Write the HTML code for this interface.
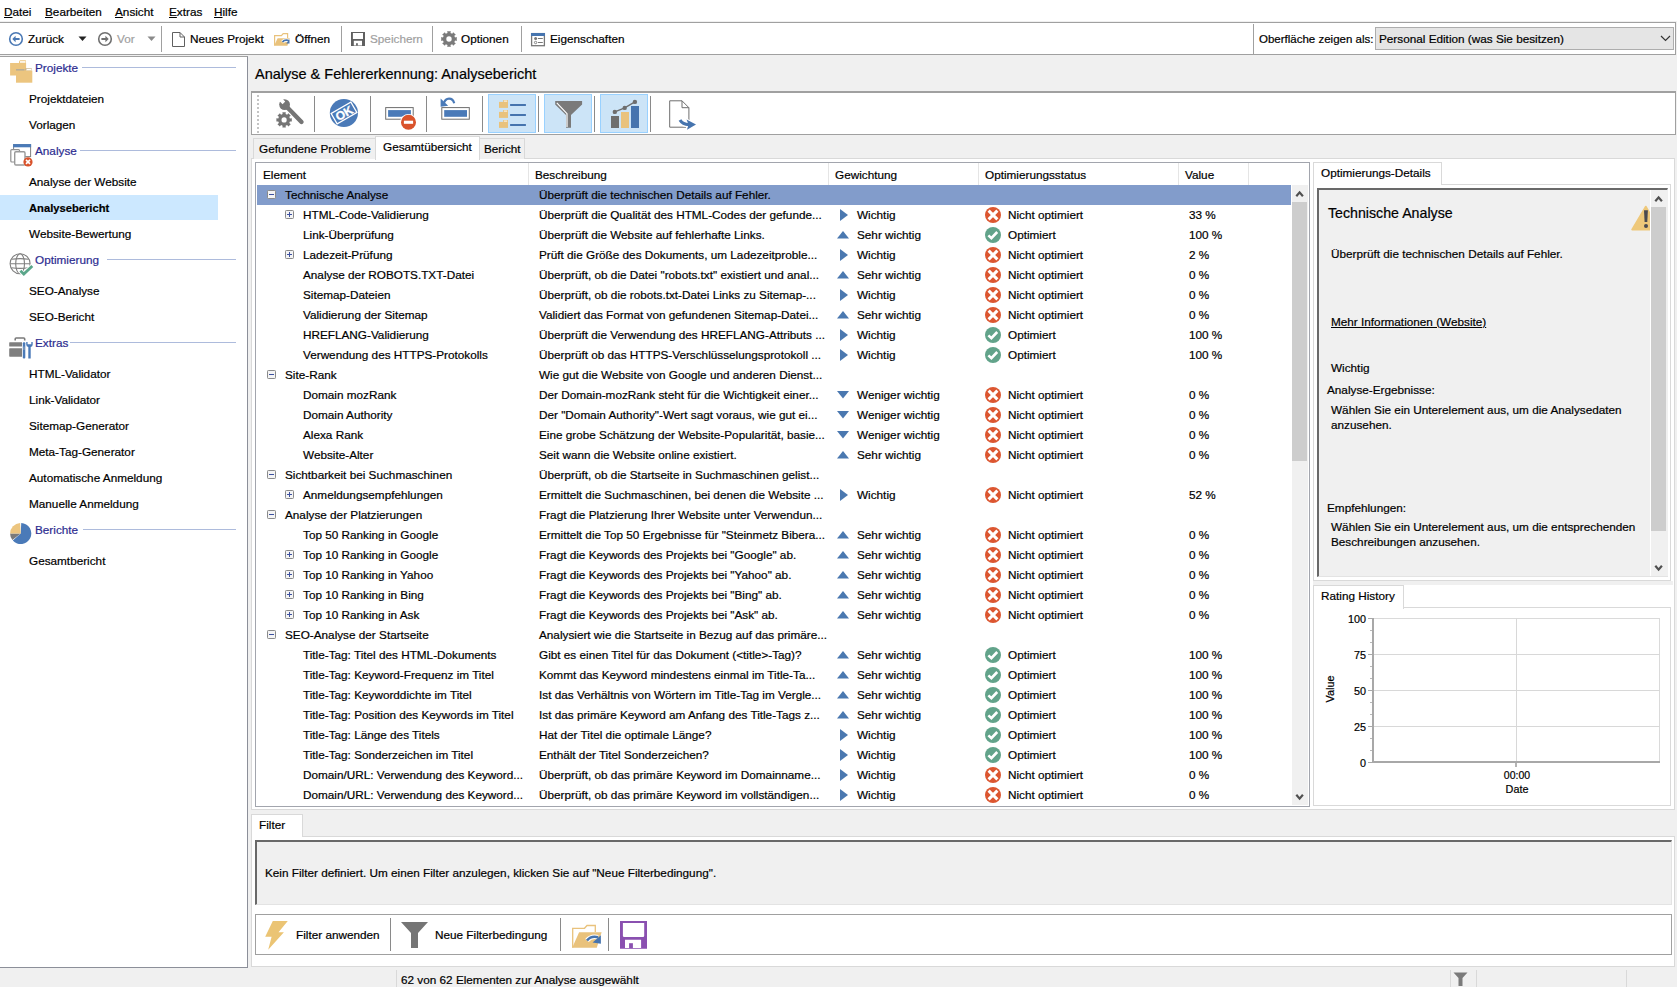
<!DOCTYPE html>
<html><head><meta charset="utf-8"><title>Analysebericht</title>
<style>
*{box-sizing:border-box;margin:0;padding:0}
html,body{width:1677px;height:987px;overflow:hidden}
body{position:relative;background:#f0f0f0;font-family:"Liberation Sans",sans-serif;font-size:11.75px;color:#000}
.a{position:absolute}
.t{position:absolute;white-space:nowrap;-webkit-text-stroke:0.2px currentColor}
u{text-decoration:underline;text-underline-offset:1px}
</style></head><body>
<div class="a" style="left:0px;top:0px;width:1677px;height:22px;background:#fff"></div>
<div class="t" style="left:4px;top:1.63px;line-height:20px;font-size:11.75px;"><u>D</u>atei</div>
<div class="t" style="left:45px;top:1.63px;line-height:20px;font-size:11.75px;"><u>B</u>earbeiten</div>
<div class="t" style="left:115px;top:1.63px;line-height:20px;font-size:11.75px;"><u>A</u>nsicht</div>
<div class="t" style="left:169px;top:1.63px;line-height:20px;font-size:11.75px;"><u>E</u>xtras</div>
<div class="t" style="left:214px;top:1.63px;line-height:20px;font-size:11.75px;"><u>H</u>ilfe</div>
<div class="a" style="left:0px;top:21px;width:1677px;height:1px;background:#f0f0f0"></div>
<div class="a" style="left:0px;top:22px;width:1676px;height:33px;background:#fff;border-top:1px solid #a0a0a0;border-bottom:1px solid #a0a0a0;border-right:1px solid #a0a0a0"></div>
<svg class="a" style="left:8px;top:31px;" width="16" height="16" viewBox="0 0 16 16"><circle cx="8" cy="8" r="6.3" fill="none" stroke="#4a78b4" stroke-width="1.6"/><path d="M4.3 8 L7.6 4.8 L7.6 6.9 L11.6 6.9 L11.6 9.1 L7.6 9.1 L7.6 11.2 Z" fill="#4a78b4"/></svg>
<div class="t" style="left:28px;top:28.83px;line-height:20px;font-size:11.75px;">Zurück</div>
<svg class="a" style="left:78px;top:36px;" width="9" height="6" viewBox="0 0 9 6"><path d="M0.5 0.5 L8.5 0.5 L4.5 5 Z" fill="#222"/></svg>
<svg class="a" style="left:97px;top:31px;" width="16" height="16" viewBox="0 0 16 16"><circle cx="8" cy="8" r="6.3" fill="none" stroke="#707070" stroke-width="1.6"/><path d="M11.7 8 L8.4 4.8 L8.4 6.9 L4.4 6.9 L4.4 9.1 L8.4 9.1 L8.4 11.2 Z" fill="#707070"/></svg>
<div class="t" style="left:117px;top:28.83px;line-height:20px;font-size:11.75px;color:#a0a0a0">Vor</div>
<svg class="a" style="left:147px;top:36px;" width="9" height="6" viewBox="0 0 9 6"><path d="M0.5 0.5 L8.5 0.5 L4.5 5 Z" fill="#8a8a8a"/></svg>
<div class="a" style="left:161px;top:26px;width:1px;height:26px;background:#a0a0a0"></div>
<svg class="a" style="left:172px;top:32px;" width="13" height="15" viewBox="0 0 13 15"><path d="M0.5 0.5 H8 L12.5 5 V14.5 H0.5 Z" fill="#fff" stroke="#606060"/><path d="M8 0.5 V5 H12.5" fill="none" stroke="#606060"/></svg>
<div class="t" style="left:190px;top:28.83px;line-height:20px;font-size:11.75px;">Neues Projekt</div>
<svg class="a" style="left:272px;top:31px;" width="20" height="17" viewBox="0 0 20 17"><path d="M2.6 14.4 V4.6 H9.4 L11.2 2.6 H15.6 V7.3" fill="none" stroke="#e9c27c" stroke-width="1.2"/><path d="M5.6 7.3 H17.8 L15.4 14.8 H2.1 Z" fill="#e9c27c"/><path d="M10.5 11 Q12.5 8.4 17 9.6" fill="none" stroke="#fff" stroke-width="3.4"/><path d="M10.5 11 Q12.5 8.4 17 9.6" fill="none" stroke="#4674ae" stroke-width="1.8"/><path d="M17.5 8.6 V12.6 H14.2 Z" fill="#4674ae"/></svg>
<div class="t" style="left:295px;top:28.83px;line-height:20px;font-size:11.75px;">Öffnen</div>
<div class="a" style="left:341px;top:26px;width:1px;height:26px;background:#a0a0a0"></div>
<svg class="a" style="left:351px;top:32px;" width="14" height="14" viewBox="0 0 14 14"><path d="M0 0 H14 V14 H0 Z M1.9 0.9 V7 H12 V0.9 Z M2.8 8.8 V13.4 H11 V8.8 Z" fill="#606060" fill-rule="evenodd"/><rect x="5.1" y="11.2" width="1.7" height="2.4" fill="#606060"/></svg>
<div class="t" style="left:370px;top:28.83px;line-height:20px;font-size:11.75px;color:#a0a0a0">Speichern</div>
<div class="a" style="left:432px;top:26px;width:1px;height:26px;background:#a0a0a0"></div>
<svg class="a" style="left:441px;top:31px;" width="16" height="16" viewBox="0 0 16 16"><path d="M15.77 6.10 L15.77 9.90 L14.03 9.43 L13.28 11.25 L14.84 12.15 L12.15 14.84 L11.25 13.28 L9.43 14.03 L9.90 15.77 L6.10 15.77 L6.57 14.03 L4.75 13.28 L3.85 14.84 L1.16 12.15 L2.72 11.25 L1.97 9.43 L0.23 9.90 L0.23 6.10 L1.97 6.57 L2.72 4.75 L1.16 3.85 L3.85 1.16 L4.75 2.72 L6.57 1.97 L6.10 0.23 L9.90 0.23 L9.43 1.97 L11.25 2.72 L12.15 1.16 L14.84 3.85 L13.28 4.75 L14.03 6.57Z M10.70 8.00 A2.7 2.7 0 1 0 5.30 8.00 A2.7 2.7 0 1 0 10.70 8.00Z" fill="#7a7a7a" fill-rule="evenodd"/></svg>
<div class="t" style="left:461px;top:28.83px;line-height:20px;font-size:11.75px;">Optionen</div>
<div class="a" style="left:521px;top:26px;width:1px;height:26px;background:#a0a0a0"></div>
<svg class="a" style="left:530px;top:32px;" width="16" height="15" viewBox="0 0 16 15"><rect x="1.6" y="1.6" width="12.8" height="12.1" fill="#fff" stroke="#777" stroke-width="1.3"/><rect x="1" y="1" width="14" height="3" fill="#4674ae"/><circle cx="5.6" cy="6.5" r="1.5" fill="#777"/><circle cx="5.6" cy="10.5" r="1.2" fill="none" stroke="#777" stroke-width="0.9"/><rect x="8" y="6" width="4.8" height="1" fill="#777"/><rect x="8" y="10" width="4.8" height="1" fill="#777"/></svg>
<div class="t" style="left:550px;top:28.83px;line-height:20px;font-size:11.75px;">Eigenschaften</div>
<div class="a" style="left:1253px;top:24px;width:1px;height:30px;background:#a0a0a0"></div>
<div class="t" style="left:1259px;top:28.92px;line-height:20px;font-size:11.5px;">Oberfläche zeigen als:</div>
<div class="a" style="left:1375px;top:27px;width:299px;height:23px;background:#e5e5e5;border:1px solid #adadad"></div>
<div class="t" style="left:1379px;top:28.83px;line-height:20px;font-size:11.75px;">Personal Edition (was Sie besitzen)</div>
<svg class="a" style="left:1660px;top:35px;" width="11" height="7" viewBox="0 0 11 7"><path d="M1 1 L5.5 5.5 L10 1" fill="none" stroke="#333" stroke-width="1.2"/></svg>
<div class="a" style="left:0px;top:56px;width:248px;height:912px;background:#fff;border-top:1px solid #a0a0a0;border-right:1px solid #8c8f99;border-bottom:1px solid #8c8f99"></div>
<svg class="a" style="left:8px;top:60px;" width="28" height="28" viewBox="0 0 28 28"><path d="M11 1.5 Q11.5 0.3 12.5 0.3 H17.5 Q18 0.3 18 1 V3 H11 Z" fill="#ecc57f"/><rect x="12" y="1.2" width="5.5" height="1.5" fill="#fff"/><rect x="2.1" y="3" width="16" height="12.5" fill="#ecc57f"/><rect x="8" y="9" width="8.5" height="2" fill="#b7ad97"/><path d="M17.5 8.2 H23.8 V10.5 H16.5 Z" fill="#c9b38a"/><rect x="18.5" y="8.9" width="5" height="1.3" fill="#fff"/><rect x="8" y="10.6" width="16.3" height="12.1" fill="#ecc57f"/></svg>
<div class="t" style="left:35px;top:57.93px;line-height:20px;font-size:11.75px;color:#2c2c90">Projekte</div>
<div class="a" style="left:82px;top:67px;width:154px;height:1px;background:#adbbdc"></div>
<div class="t" style="left:29px;top:88.63px;line-height:20px;font-size:11.75px;">Projektdateien</div>
<div class="t" style="left:29px;top:114.73px;line-height:20px;font-size:11.75px;">Vorlagen</div>
<svg class="a" style="left:8px;top:142px;" width="28" height="28" viewBox="0 0 28 28"><rect x="5.6" y="2.6" width="17" height="12" fill="#fff" stroke="#808080"/><rect x="5.1" y="2.1" width="18" height="3.2" fill="#4a7ab8"/><rect x="2.8" y="7.6" width="8.7" height="12.4" rx="1" fill="#fff" stroke="#909090" stroke-width="1.2"/><rect x="6.7" y="9.7" width="10.3" height="13.3" rx="1.2" fill="#fff" stroke="#999" stroke-width="1.4"/><circle cx="20" cy="19.9" r="4.6" fill="#d9532c"/><path d="M18 17.9 L22 21.9 M22 17.9 L18 21.9" stroke="#fff" stroke-width="1.6"/></svg>
<div class="t" style="left:35px;top:140.53px;line-height:20px;font-size:11.75px;color:#2c2c90">Analyse</div>
<div class="a" style="left:80px;top:150px;width:156px;height:1px;background:#adbbdc"></div>
<div class="t" style="left:29px;top:171.53px;line-height:20px;font-size:11.75px;">Analyse der Website</div>
<div class="a" style="left:0px;top:195px;width:218px;height:25px;background:#cce8ff"></div>
<div class="t" style="left:29px;top:197.82px;line-height:20px;font-size:11.2px;font-weight:bold;font-size:11.2px">Analysebericht</div>
<div class="t" style="left:29px;top:223.73px;line-height:20px;font-size:11.75px;">Website-Bewertung</div>
<svg class="a" style="left:8px;top:251px;" width="28" height="28" viewBox="0 0 28 28"><circle cx="12.1" cy="12.8" r="10" fill="none" stroke="#808080" stroke-width="1.1"/><ellipse cx="12.1" cy="12.8" rx="4.4" ry="10" fill="none" stroke="#808080" stroke-width="1.1"/><path d="M3.5 8.2 Q12 7 20.7 8.2 M2.2 12.8 H22 M3.5 16.8 Q12 18 20.7 16.8" fill="none" stroke="#808080" stroke-width="1.1"/><path d="M12.4 19.8 L15.8 23.1 L24.3 14.9" fill="none" stroke="#fff" stroke-width="4.5"/><path d="M12.4 19.8 L15.8 23.1 L24.3 14.9" fill="none" stroke="#5ba68a" stroke-width="2.8"/></svg>
<div class="t" style="left:35px;top:249.53px;line-height:20px;font-size:11.75px;color:#2c2c90">Optimierung</div>
<div class="a" style="left:107px;top:259px;width:129px;height:1px;background:#adbbdc"></div>
<div class="t" style="left:29px;top:280.53px;line-height:20px;font-size:11.75px;">SEO-Analyse</div>
<div class="t" style="left:29px;top:306.53px;line-height:20px;font-size:11.75px;">SEO-Bericht</div>
<svg class="a" style="left:8px;top:334px;" width="28" height="28" viewBox="0 0 28 28"><path d="M7.2 6.6 V5 Q7.2 4 8.2 4 H15.7 Q16.7 4 16.7 5 V6.6" fill="none" stroke="#7a7a7a" stroke-width="1.6"/><rect x="1.2" y="8.2" width="17.3" height="4.4" rx="0.6" fill="#7f7f7f"/><rect x="1.2" y="14.2" width="17.3" height="8.5" rx="0.6" fill="#7f7f7f"/><rect x="14" y="8" width="5" height="17" fill="#fff"/><rect x="14.8" y="8.2" width="2.5" height="16.4" rx="1" fill="#4a7ab8"/><rect x="15.5" y="12.5" width="1" height="3.5" fill="#9ab"/><path d="M18.2 8 V10.5 Q18.2 12.5 20.3 13 V24.6 H22.7 V13 Q24.7 12.5 24.7 10.5 V8 L23.3 8 V10.3 H19.6 V8 Z" fill="#4a7ab8"/></svg>
<div class="t" style="left:35px;top:332.53px;line-height:20px;font-size:11.75px;color:#2c2c90">Extras</div>
<div class="a" style="left:70px;top:342px;width:166px;height:1px;background:#adbbdc"></div>
<div class="t" style="left:29px;top:363.53px;line-height:20px;font-size:11.75px;">HTML-Validator</div>
<div class="t" style="left:29px;top:389.53px;line-height:20px;font-size:11.75px;">Link-Validator</div>
<div class="t" style="left:29px;top:415.53px;line-height:20px;font-size:11.75px;">Sitemap-Generator</div>
<div class="t" style="left:29px;top:441.53px;line-height:20px;font-size:11.75px;">Meta-Tag-Generator</div>
<div class="t" style="left:29px;top:467.53px;line-height:20px;font-size:11.75px;">Automatische Anmeldung</div>
<div class="t" style="left:29px;top:493.53px;line-height:20px;font-size:11.75px;">Manuelle Anmeldung</div>
<svg class="a" style="left:8px;top:521px;" width="28" height="28" viewBox="0 0 28 28"><path d="M12.7 12.5 L13.25 1.91 A10.6 10.6 0 1 1 4.82 19.59 Z" fill="#4a7ab8"/><path d="M12.7 12.5 L4.35 19.03 A10.6 10.6 0 0 1 2.10 12.50 Z" fill="#7a7a7a"/><path d="M12.7 12.5 L2.10 12.50 A10.6 10.6 0 0 1 12.15 1.91 Z" fill="#ecc57f"/></svg>
<div class="t" style="left:35px;top:519.53px;line-height:20px;font-size:11.75px;color:#2c2c90">Berichte</div>
<div class="a" style="left:83px;top:529px;width:153px;height:1px;background:#adbbdc"></div>
<div class="t" style="left:29px;top:550.53px;line-height:20px;font-size:11.75px;">Gesamtbericht</div>
<div class="t" style="left:255px;top:63.68px;line-height:20px;font-size:14.5px;">Analyse &amp; Fehlererkennung: Analysebericht</div>
<div class="a" style="left:251px;top:91px;width:1425px;height:44px;background:#fff;border:1px solid #a0a0a0;border-top:2px solid #a0a0a0"></div>
<div class="a" style="left:257px;top:95px;width:2px;height:2px;background:#c4c4c4"></div>
<div class="a" style="left:257px;top:99px;width:2px;height:2px;background:#c4c4c4"></div>
<div class="a" style="left:257px;top:103px;width:2px;height:2px;background:#c4c4c4"></div>
<div class="a" style="left:257px;top:107px;width:2px;height:2px;background:#c4c4c4"></div>
<div class="a" style="left:257px;top:111px;width:2px;height:2px;background:#c4c4c4"></div>
<div class="a" style="left:257px;top:115px;width:2px;height:2px;background:#c4c4c4"></div>
<div class="a" style="left:257px;top:119px;width:2px;height:2px;background:#c4c4c4"></div>
<div class="a" style="left:257px;top:123px;width:2px;height:2px;background:#c4c4c4"></div>
<div class="a" style="left:257px;top:127px;width:2px;height:2px;background:#c4c4c4"></div>
<div class="a" style="left:257px;top:131px;width:2px;height:2px;background:#c4c4c4"></div>
<div class="a" style="left:314px;top:96px;width:1px;height:36px;background:#8a8a8a"></div>
<div class="a" style="left:370px;top:96px;width:1px;height:36px;background:#8a8a8a"></div>
<div class="a" style="left:426px;top:96px;width:1px;height:36px;background:#8a8a8a"></div>
<div class="a" style="left:482px;top:96px;width:1px;height:36px;background:#8a8a8a"></div>
<div class="a" style="left:538px;top:96px;width:1px;height:36px;background:#8a8a8a"></div>
<div class="a" style="left:594px;top:96px;width:1px;height:36px;background:#8a8a8a"></div>
<div class="a" style="left:650px;top:96px;width:1px;height:36px;background:#8a8a8a"></div>
<div class="a" style="left:488px;top:94px;width:48px;height:39px;background:#cce4f7;border:1px solid #99d1ff"></div>
<div class="a" style="left:544px;top:94px;width:48px;height:39px;background:#cce4f7;border:1px solid #99d1ff"></div>
<div class="a" style="left:600px;top:94px;width:48px;height:39px;background:#cce4f7;border:1px solid #99d1ff"></div>
<svg class="a" style="left:274px;top:97px;" width="34" height="34" viewBox="0 0 34 34"><path d="M10.5 7.5 L27.5 25" stroke="#757575" stroke-width="4.4" stroke-linecap="round"/><circle cx="10.6" cy="7.6" r="5.4" fill="#757575"/><path d="M4.5 3.2 L8.6 7.2 L11.2 4.6 L7.2 0.4 Z" fill="#fff"/><circle cx="10.1" cy="22.9" r="8.6" fill="#fff"/><path d="M17.81 21.18 L17.81 24.62 L15.91 24.40 L15.27 25.95 L16.77 27.13 L14.33 29.57 L13.15 28.07 L11.60 28.71 L11.82 30.61 L8.38 30.61 L8.60 28.71 L7.05 28.07 L5.87 29.57 L3.43 27.13 L4.93 25.95 L4.29 24.40 L2.39 24.62 L2.39 21.18 L4.29 21.40 L4.93 19.85 L3.43 18.67 L5.87 16.23 L7.05 17.73 L8.60 17.09 L8.38 15.19 L11.82 15.19 L11.60 17.09 L13.15 17.73 L14.33 16.23 L16.77 18.67 L15.27 19.85 L15.91 21.40Z M12.70 22.90 A2.6 2.6 0 1 0 7.50 22.90 A2.6 2.6 0 1 0 12.70 22.90Z" fill="#757575" fill-rule="evenodd"/></svg>
<svg class="a" style="left:329px;top:98px;" width="30" height="30" viewBox="0 0 30 30"><circle cx="14.9" cy="15" r="14.1" fill="#4a7ab8"/><g transform="rotate(-30 15 15)"><rect x="3.6" y="9" width="22.8" height="12" fill="none" stroke="#fff" stroke-width="1.3"/><text x="15" y="19.4" text-anchor="middle" font-family="Liberation Sans" font-weight="bold" font-size="12" fill="#fff" stroke="#fff" stroke-width="0.3">OK</text></g></svg>
<svg class="a" style="left:384px;top:104px;" width="34" height="28" viewBox="0 0 34 28"><rect x="1.7" y="3.6" width="27.5" height="11.6" fill="#fff" stroke="#6e6e6e"/><rect x="4.1" y="6.1" width="22.8" height="6.7" fill="#4a7ab8"/><circle cx="24.5" cy="18.2" r="8.3" fill="#fff"/><circle cx="24.5" cy="18.2" r="7.5" fill="#d9532c"/><rect x="19.9" y="16.7" width="9.2" height="3.1" fill="#fff"/></svg>
<svg class="a" style="left:439px;top:96px;" width="34" height="28" viewBox="0 0 34 28"><rect x="2.8" y="11.6" width="27.5" height="11.6" fill="#fff" stroke="#6e6e6e"/><rect x="5.2" y="14.1" width="22.8" height="6.7" fill="#4a7ab8"/><path d="M4.6 8 Q6 2.6 10 2.6 Q14 2.6 15.2 7.2" fill="none" stroke="#fff" stroke-width="4"/><path d="M4.6 8 Q6 2.6 10 2.6 Q14 2.6 15.2 7.2" fill="none" stroke="#4a7ab8" stroke-width="2.2"/><path d="M1.6 2.6 L1.6 10.8 L9.2 9.8 Z" fill="#4a7ab8"/></svg>
<svg class="a" style="left:488px;top:94px;" width="48" height="38" viewBox="0 0 48 38"><rect x="15.2" y="6" width="4.8" height="2.2" fill="#e9c27c"/><rect x="16" y="6.6" width="3.2" height="1" fill="#fff"/><rect x="11" y="7.9" width="9" height="6" fill="#e9c27c"/><rect x="22.1" y="10" width="15.8" height="2" fill="#4674ae"/><rect x="15.2" y="16" width="4.8" height="2.2" fill="#e9c27c"/><rect x="16" y="16.6" width="3.2" height="1" fill="#fff"/><rect x="11" y="17.9" width="9" height="6" fill="#e9c27c"/><rect x="22.1" y="20" width="15.8" height="2" fill="#4674ae"/><rect x="15.2" y="26" width="4.8" height="2.2" fill="#e9c27c"/><rect x="16" y="26.6" width="3.2" height="1" fill="#fff"/><rect x="11" y="27.9" width="9" height="6" fill="#e9c27c"/><rect x="22.1" y="30" width="15.8" height="2" fill="#4674ae"/></svg>
<svg class="a" style="left:544px;top:94px;" width="48" height="38" viewBox="0 0 48 38"><path d="M11.2 7.1 H38.1 V10.5 L27 21 V33.8 H22 V21 L11.2 10.5 Z" fill="#7a7a7a"/><path d="M12.8 8.9 L23 19.7 V33.1" fill="none" stroke="#fff" stroke-width="1.2"/></svg>
<svg class="a" style="left:600px;top:94px;" width="48" height="38" viewBox="0 0 48 38"><rect x="11" y="22" width="8" height="12" fill="#6e6e6e"/><rect x="21" y="18" width="8" height="16" fill="#e9c27c"/><rect x="31" y="12" width="8" height="22" fill="#4674ae"/><path d="M14.8 17.9 L24.7 13.9 L34.9 7.9" fill="none" stroke="#6e6e6e" stroke-width="1.3"/><circle cx="14.8" cy="17.9" r="2.2" fill="#6e6e6e"/><circle cx="24.7" cy="13.9" r="2.2" fill="#6e6e6e"/><circle cx="34.9" cy="7.9" r="2.2" fill="#6e6e6e"/></svg>
<svg class="a" style="left:660px;top:94px;" width="40" height="40" viewBox="0 0 40 40"><path d="M9.7 6.8 H22 L28.9 13.7 V33.2 H9.7 Z" fill="#fff" stroke="#6e6e6e"/><path d="M22 6.8 V13.7 H28.9" fill="none" stroke="#6e6e6e"/><path d="M20 26 Q23 31 30 30.5" fill="none" stroke="#fff" stroke-width="5.5"/><path d="M26 25 L36.5 30.5 L27 36.5 Z" fill="#fff" stroke="#fff" stroke-width="1.5"/><path d="M20 26 Q23 31 30 30.5" fill="none" stroke="#4674ae" stroke-width="3.2"/><path d="M26.5 25.5 L36 30.5 L27 35.8 L28.5 30.5 Z" fill="#4674ae"/></svg>
<div class="a" style="left:251px;top:158px;width:1424px;height:652px;background:#fff;border:1px solid #d9d9d9"></div>
<div class="a" style="left:253px;top:138px;width:123px;height:21px;background:#f0f0f0;border:1px solid #d9d9d9;border-bottom:none"></div>
<div class="a" style="left:479px;top:138px;width:46px;height:21px;background:#f0f0f0;border:1px solid #d9d9d9;border-bottom:none"></div>
<div class="a" style="left:375px;top:136px;width:105px;height:24px;background:#fff;border:1px solid #d9d9d9;border-bottom:none"></div>
<div class="t" style="left:259px;top:138.68px;line-height:20px;font-size:11.75px;">Gefundene Probleme</div>
<div class="t" style="left:383px;top:136.63px;line-height:20px;font-size:11.75px;">Gesamtübersicht</div>
<div class="t" style="left:484px;top:138.68px;line-height:20px;font-size:11.75px;">Bericht</div>
<div class="a" style="left:255px;top:162px;width:1055px;height:645px;background:#fff;border:1px solid #a2a5ad"></div>
<div class="a" style="left:528px;top:163px;width:1px;height:22px;background:#e5e5e5"></div>
<div class="a" style="left:828px;top:163px;width:1px;height:22px;background:#e5e5e5"></div>
<div class="a" style="left:978px;top:163px;width:1px;height:22px;background:#e5e5e5"></div>
<div class="a" style="left:1178px;top:163px;width:1px;height:22px;background:#e5e5e5"></div>
<div class="a" style="left:1248px;top:163px;width:1px;height:22px;background:#e5e5e5"></div>
<div class="t" style="left:263px;top:164.63px;line-height:20px;font-size:11.75px;">Element</div>
<div class="t" style="left:535px;top:164.63px;line-height:20px;font-size:11.75px;">Beschreibung</div>
<div class="t" style="left:835px;top:164.63px;line-height:20px;font-size:11.75px;">Gewichtung</div>
<div class="t" style="left:985px;top:164.63px;line-height:20px;font-size:11.75px;">Optimierungsstatus</div>
<div class="t" style="left:1185px;top:164.63px;line-height:20px;font-size:11.75px;">Value</div>
<div class="a" style="left:257px;top:185px;width:1034px;height:20px;background:#829ccb"></div>
<svg class="a" style="left:267px;top:190px;" width="9" height="9" viewBox="0 0 9 9"><rect x="0.5" y="0.5" width="8" height="8" rx="0.8" fill="#f4f4f4" stroke="#8a8a8a"/><path d="M2 4.5 H7" stroke="#3c50a0" stroke-width="1"/></svg>
<div class="t" style="left:285px;top:184.93px;line-height:20px;font-size:11.75px;">Technische Analyse</div>
<div class="t" style="left:539px;top:184.93px;line-height:20px;font-size:11.75px;">Überprüft die technischen Details auf Fehler.</div>
<svg class="a" style="left:285px;top:210px;" width="9" height="9" viewBox="0 0 9 9"><rect x="0.5" y="0.5" width="8" height="8" rx="0.8" fill="#f4f4f4" stroke="#8a8a8a"/><path d="M2 4.5 H7" stroke="#3c50a0" stroke-width="1"/><path d="M4.5 2 V7" stroke="#3c50a0" stroke-width="1"/></svg>
<div class="t" style="left:303px;top:204.93px;line-height:20px;font-size:11.75px;">HTML-Code-Validierung</div>
<div class="t" style="left:539px;top:204.93px;line-height:20px;font-size:11.75px;">Überprüft die Qualität des HTML-Codes der gefunde...</div>
<svg class="a" style="left:839px;top:209px;" width="10" height="12" viewBox="0 0 10 12"><path d="M1 0 L9 6 L1 12 Z" fill="#4a78b0"/></svg>
<div class="t" style="left:857px;top:204.93px;line-height:20px;font-size:11.75px;">Wichtig</div>
<svg class="a" style="left:985px;top:207px;" width="16" height="16" viewBox="0 0 16 16"><circle cx="8" cy="8" r="8" fill="#dc5630"/><path d="M3.6 3.6 L12.4 12.4 M12.4 3.6 L3.6 12.4" stroke="#fff" stroke-width="3"/></svg>
<div class="t" style="left:1008px;top:204.93px;line-height:20px;font-size:11.75px;">Nicht optimiert</div>
<div class="t" style="left:1189px;top:204.93px;line-height:20px;font-size:11.75px;">33 %</div>
<div class="t" style="left:303px;top:224.93px;line-height:20px;font-size:11.75px;">Link-Überprüfung</div>
<div class="t" style="left:539px;top:224.93px;line-height:20px;font-size:11.75px;">Überprüft die Website auf fehlerhafte Links.</div>
<svg class="a" style="left:837px;top:230px;" width="12" height="9" viewBox="0 0 12 9"><path d="M6 1 L12 8.5 L0 8.5 Z" fill="#4a78b0"/></svg>
<div class="t" style="left:857px;top:224.93px;line-height:20px;font-size:11.75px;">Sehr wichtig</div>
<svg class="a" style="left:985px;top:227px;" width="16" height="16" viewBox="0 0 16 16"><circle cx="8" cy="8" r="8" fill="#62a38a"/><path d="M3.4 8.4 L6.4 11.2 L12.2 5" fill="none" stroke="#fff" stroke-width="2.6"/></svg>
<div class="t" style="left:1008px;top:224.93px;line-height:20px;font-size:11.75px;">Optimiert</div>
<div class="t" style="left:1189px;top:224.93px;line-height:20px;font-size:11.75px;">100 %</div>
<svg class="a" style="left:285px;top:250px;" width="9" height="9" viewBox="0 0 9 9"><rect x="0.5" y="0.5" width="8" height="8" rx="0.8" fill="#f4f4f4" stroke="#8a8a8a"/><path d="M2 4.5 H7" stroke="#3c50a0" stroke-width="1"/><path d="M4.5 2 V7" stroke="#3c50a0" stroke-width="1"/></svg>
<div class="t" style="left:303px;top:244.93px;line-height:20px;font-size:11.75px;">Ladezeit-Prüfung</div>
<div class="t" style="left:539px;top:244.93px;line-height:20px;font-size:11.75px;">Prüft die Größe des Dokuments, um Ladezeitproble...</div>
<svg class="a" style="left:839px;top:249px;" width="10" height="12" viewBox="0 0 10 12"><path d="M1 0 L9 6 L1 12 Z" fill="#4a78b0"/></svg>
<div class="t" style="left:857px;top:244.93px;line-height:20px;font-size:11.75px;">Wichtig</div>
<svg class="a" style="left:985px;top:247px;" width="16" height="16" viewBox="0 0 16 16"><circle cx="8" cy="8" r="8" fill="#dc5630"/><path d="M3.6 3.6 L12.4 12.4 M12.4 3.6 L3.6 12.4" stroke="#fff" stroke-width="3"/></svg>
<div class="t" style="left:1008px;top:244.93px;line-height:20px;font-size:11.75px;">Nicht optimiert</div>
<div class="t" style="left:1189px;top:244.93px;line-height:20px;font-size:11.75px;">2 %</div>
<div class="t" style="left:303px;top:264.93px;line-height:20px;font-size:11.75px;">Analyse der ROBOTS.TXT-Datei</div>
<div class="t" style="left:539px;top:264.93px;line-height:20px;font-size:11.75px;">Überprüft, ob die Datei &quot;robots.txt&quot; existiert und anal...</div>
<svg class="a" style="left:837px;top:270px;" width="12" height="9" viewBox="0 0 12 9"><path d="M6 1 L12 8.5 L0 8.5 Z" fill="#4a78b0"/></svg>
<div class="t" style="left:857px;top:264.93px;line-height:20px;font-size:11.75px;">Sehr wichtig</div>
<svg class="a" style="left:985px;top:267px;" width="16" height="16" viewBox="0 0 16 16"><circle cx="8" cy="8" r="8" fill="#dc5630"/><path d="M3.6 3.6 L12.4 12.4 M12.4 3.6 L3.6 12.4" stroke="#fff" stroke-width="3"/></svg>
<div class="t" style="left:1008px;top:264.93px;line-height:20px;font-size:11.75px;">Nicht optimiert</div>
<div class="t" style="left:1189px;top:264.93px;line-height:20px;font-size:11.75px;">0 %</div>
<div class="t" style="left:303px;top:284.93px;line-height:20px;font-size:11.75px;">Sitemap-Dateien</div>
<div class="t" style="left:539px;top:284.93px;line-height:20px;font-size:11.75px;">Überprüft, ob die robots.txt-Datei Links zu Sitemap-...</div>
<svg class="a" style="left:839px;top:289px;" width="10" height="12" viewBox="0 0 10 12"><path d="M1 0 L9 6 L1 12 Z" fill="#4a78b0"/></svg>
<div class="t" style="left:857px;top:284.93px;line-height:20px;font-size:11.75px;">Wichtig</div>
<svg class="a" style="left:985px;top:287px;" width="16" height="16" viewBox="0 0 16 16"><circle cx="8" cy="8" r="8" fill="#dc5630"/><path d="M3.6 3.6 L12.4 12.4 M12.4 3.6 L3.6 12.4" stroke="#fff" stroke-width="3"/></svg>
<div class="t" style="left:1008px;top:284.93px;line-height:20px;font-size:11.75px;">Nicht optimiert</div>
<div class="t" style="left:1189px;top:284.93px;line-height:20px;font-size:11.75px;">0 %</div>
<div class="t" style="left:303px;top:304.93px;line-height:20px;font-size:11.75px;">Validierung der Sitemap</div>
<div class="t" style="left:539px;top:304.93px;line-height:20px;font-size:11.75px;">Validiert das Format von gefundenen Sitemap-Datei...</div>
<svg class="a" style="left:837px;top:310px;" width="12" height="9" viewBox="0 0 12 9"><path d="M6 1 L12 8.5 L0 8.5 Z" fill="#4a78b0"/></svg>
<div class="t" style="left:857px;top:304.93px;line-height:20px;font-size:11.75px;">Sehr wichtig</div>
<svg class="a" style="left:985px;top:307px;" width="16" height="16" viewBox="0 0 16 16"><circle cx="8" cy="8" r="8" fill="#dc5630"/><path d="M3.6 3.6 L12.4 12.4 M12.4 3.6 L3.6 12.4" stroke="#fff" stroke-width="3"/></svg>
<div class="t" style="left:1008px;top:304.93px;line-height:20px;font-size:11.75px;">Nicht optimiert</div>
<div class="t" style="left:1189px;top:304.93px;line-height:20px;font-size:11.75px;">0 %</div>
<div class="t" style="left:303px;top:324.93px;line-height:20px;font-size:11.75px;">HREFLANG-Validierung</div>
<div class="t" style="left:539px;top:324.93px;line-height:20px;font-size:11.75px;">Überprüft die Verwendung des HREFLANG-Attributs ...</div>
<svg class="a" style="left:839px;top:329px;" width="10" height="12" viewBox="0 0 10 12"><path d="M1 0 L9 6 L1 12 Z" fill="#4a78b0"/></svg>
<div class="t" style="left:857px;top:324.93px;line-height:20px;font-size:11.75px;">Wichtig</div>
<svg class="a" style="left:985px;top:327px;" width="16" height="16" viewBox="0 0 16 16"><circle cx="8" cy="8" r="8" fill="#62a38a"/><path d="M3.4 8.4 L6.4 11.2 L12.2 5" fill="none" stroke="#fff" stroke-width="2.6"/></svg>
<div class="t" style="left:1008px;top:324.93px;line-height:20px;font-size:11.75px;">Optimiert</div>
<div class="t" style="left:1189px;top:324.93px;line-height:20px;font-size:11.75px;">100 %</div>
<div class="t" style="left:303px;top:344.93px;line-height:20px;font-size:11.75px;">Verwendung des HTTPS-Protokolls</div>
<div class="t" style="left:539px;top:344.93px;line-height:20px;font-size:11.75px;">Überprüft ob das HTTPS-Verschlüsselungsprotokoll ...</div>
<svg class="a" style="left:839px;top:349px;" width="10" height="12" viewBox="0 0 10 12"><path d="M1 0 L9 6 L1 12 Z" fill="#4a78b0"/></svg>
<div class="t" style="left:857px;top:344.93px;line-height:20px;font-size:11.75px;">Wichtig</div>
<svg class="a" style="left:985px;top:347px;" width="16" height="16" viewBox="0 0 16 16"><circle cx="8" cy="8" r="8" fill="#62a38a"/><path d="M3.4 8.4 L6.4 11.2 L12.2 5" fill="none" stroke="#fff" stroke-width="2.6"/></svg>
<div class="t" style="left:1008px;top:344.93px;line-height:20px;font-size:11.75px;">Optimiert</div>
<div class="t" style="left:1189px;top:344.93px;line-height:20px;font-size:11.75px;">100 %</div>
<svg class="a" style="left:267px;top:370px;" width="9" height="9" viewBox="0 0 9 9"><rect x="0.5" y="0.5" width="8" height="8" rx="0.8" fill="#f4f4f4" stroke="#8a8a8a"/><path d="M2 4.5 H7" stroke="#3c50a0" stroke-width="1"/></svg>
<div class="t" style="left:285px;top:364.93px;line-height:20px;font-size:11.75px;">Site-Rank</div>
<div class="t" style="left:539px;top:364.93px;line-height:20px;font-size:11.75px;">Wie gut die Website von Google und anderen Dienst...</div>
<div class="t" style="left:303px;top:384.93px;line-height:20px;font-size:11.75px;">Domain mozRank</div>
<div class="t" style="left:539px;top:384.93px;line-height:20px;font-size:11.75px;">Der Domain-mozRank steht für die Wichtigkeit einer...</div>
<svg class="a" style="left:837px;top:390px;" width="12" height="9" viewBox="0 0 12 9"><path d="M0 1 L12 1 L6 8.5 Z" fill="#4a78b0"/></svg>
<div class="t" style="left:857px;top:384.93px;line-height:20px;font-size:11.75px;">Weniger wichtig</div>
<svg class="a" style="left:985px;top:387px;" width="16" height="16" viewBox="0 0 16 16"><circle cx="8" cy="8" r="8" fill="#dc5630"/><path d="M3.6 3.6 L12.4 12.4 M12.4 3.6 L3.6 12.4" stroke="#fff" stroke-width="3"/></svg>
<div class="t" style="left:1008px;top:384.93px;line-height:20px;font-size:11.75px;">Nicht optimiert</div>
<div class="t" style="left:1189px;top:384.93px;line-height:20px;font-size:11.75px;">0 %</div>
<div class="t" style="left:303px;top:404.93px;line-height:20px;font-size:11.75px;">Domain Authority</div>
<div class="t" style="left:539px;top:404.93px;line-height:20px;font-size:11.75px;">Der &quot;Domain Authority&quot;-Wert sagt voraus, wie gut ei...</div>
<svg class="a" style="left:837px;top:410px;" width="12" height="9" viewBox="0 0 12 9"><path d="M0 1 L12 1 L6 8.5 Z" fill="#4a78b0"/></svg>
<div class="t" style="left:857px;top:404.93px;line-height:20px;font-size:11.75px;">Weniger wichtig</div>
<svg class="a" style="left:985px;top:407px;" width="16" height="16" viewBox="0 0 16 16"><circle cx="8" cy="8" r="8" fill="#dc5630"/><path d="M3.6 3.6 L12.4 12.4 M12.4 3.6 L3.6 12.4" stroke="#fff" stroke-width="3"/></svg>
<div class="t" style="left:1008px;top:404.93px;line-height:20px;font-size:11.75px;">Nicht optimiert</div>
<div class="t" style="left:1189px;top:404.93px;line-height:20px;font-size:11.75px;">0 %</div>
<div class="t" style="left:303px;top:424.93px;line-height:20px;font-size:11.75px;">Alexa Rank</div>
<div class="t" style="left:539px;top:424.93px;line-height:20px;font-size:11.75px;">Eine grobe Schätzung der Website-Popularität, basie...</div>
<svg class="a" style="left:837px;top:430px;" width="12" height="9" viewBox="0 0 12 9"><path d="M0 1 L12 1 L6 8.5 Z" fill="#4a78b0"/></svg>
<div class="t" style="left:857px;top:424.93px;line-height:20px;font-size:11.75px;">Weniger wichtig</div>
<svg class="a" style="left:985px;top:427px;" width="16" height="16" viewBox="0 0 16 16"><circle cx="8" cy="8" r="8" fill="#dc5630"/><path d="M3.6 3.6 L12.4 12.4 M12.4 3.6 L3.6 12.4" stroke="#fff" stroke-width="3"/></svg>
<div class="t" style="left:1008px;top:424.93px;line-height:20px;font-size:11.75px;">Nicht optimiert</div>
<div class="t" style="left:1189px;top:424.93px;line-height:20px;font-size:11.75px;">0 %</div>
<div class="t" style="left:303px;top:444.93px;line-height:20px;font-size:11.75px;">Website-Alter</div>
<div class="t" style="left:539px;top:444.93px;line-height:20px;font-size:11.75px;">Seit wann die Website online existiert.</div>
<svg class="a" style="left:837px;top:450px;" width="12" height="9" viewBox="0 0 12 9"><path d="M6 1 L12 8.5 L0 8.5 Z" fill="#4a78b0"/></svg>
<div class="t" style="left:857px;top:444.93px;line-height:20px;font-size:11.75px;">Sehr wichtig</div>
<svg class="a" style="left:985px;top:447px;" width="16" height="16" viewBox="0 0 16 16"><circle cx="8" cy="8" r="8" fill="#dc5630"/><path d="M3.6 3.6 L12.4 12.4 M12.4 3.6 L3.6 12.4" stroke="#fff" stroke-width="3"/></svg>
<div class="t" style="left:1008px;top:444.93px;line-height:20px;font-size:11.75px;">Nicht optimiert</div>
<div class="t" style="left:1189px;top:444.93px;line-height:20px;font-size:11.75px;">0 %</div>
<svg class="a" style="left:267px;top:470px;" width="9" height="9" viewBox="0 0 9 9"><rect x="0.5" y="0.5" width="8" height="8" rx="0.8" fill="#f4f4f4" stroke="#8a8a8a"/><path d="M2 4.5 H7" stroke="#3c50a0" stroke-width="1"/></svg>
<div class="t" style="left:285px;top:464.93px;line-height:20px;font-size:11.75px;">Sichtbarkeit bei Suchmaschinen</div>
<div class="t" style="left:539px;top:464.93px;line-height:20px;font-size:11.75px;">Überprüft, ob die Startseite in Suchmaschinen gelist...</div>
<svg class="a" style="left:285px;top:490px;" width="9" height="9" viewBox="0 0 9 9"><rect x="0.5" y="0.5" width="8" height="8" rx="0.8" fill="#f4f4f4" stroke="#8a8a8a"/><path d="M2 4.5 H7" stroke="#3c50a0" stroke-width="1"/><path d="M4.5 2 V7" stroke="#3c50a0" stroke-width="1"/></svg>
<div class="t" style="left:303px;top:484.93px;line-height:20px;font-size:11.75px;">Anmeldungsempfehlungen</div>
<div class="t" style="left:539px;top:484.93px;line-height:20px;font-size:11.75px;">Ermittelt die Suchmaschinen, bei denen die Website ...</div>
<svg class="a" style="left:839px;top:489px;" width="10" height="12" viewBox="0 0 10 12"><path d="M1 0 L9 6 L1 12 Z" fill="#4a78b0"/></svg>
<div class="t" style="left:857px;top:484.93px;line-height:20px;font-size:11.75px;">Wichtig</div>
<svg class="a" style="left:985px;top:487px;" width="16" height="16" viewBox="0 0 16 16"><circle cx="8" cy="8" r="8" fill="#dc5630"/><path d="M3.6 3.6 L12.4 12.4 M12.4 3.6 L3.6 12.4" stroke="#fff" stroke-width="3"/></svg>
<div class="t" style="left:1008px;top:484.93px;line-height:20px;font-size:11.75px;">Nicht optimiert</div>
<div class="t" style="left:1189px;top:484.93px;line-height:20px;font-size:11.75px;">52 %</div>
<svg class="a" style="left:267px;top:510px;" width="9" height="9" viewBox="0 0 9 9"><rect x="0.5" y="0.5" width="8" height="8" rx="0.8" fill="#f4f4f4" stroke="#8a8a8a"/><path d="M2 4.5 H7" stroke="#3c50a0" stroke-width="1"/></svg>
<div class="t" style="left:285px;top:504.93px;line-height:20px;font-size:11.75px;">Analyse der Platzierungen</div>
<div class="t" style="left:539px;top:504.93px;line-height:20px;font-size:11.75px;">Fragt die Platzierung Ihrer Website unter Verwendun...</div>
<div class="t" style="left:303px;top:524.93px;line-height:20px;font-size:11.75px;">Top 50 Ranking in Google</div>
<div class="t" style="left:539px;top:524.93px;line-height:20px;font-size:11.75px;">Ermittelt die Top 50 Ergebnisse für &quot;Steinmetz Bibera...</div>
<svg class="a" style="left:837px;top:530px;" width="12" height="9" viewBox="0 0 12 9"><path d="M6 1 L12 8.5 L0 8.5 Z" fill="#4a78b0"/></svg>
<div class="t" style="left:857px;top:524.93px;line-height:20px;font-size:11.75px;">Sehr wichtig</div>
<svg class="a" style="left:985px;top:527px;" width="16" height="16" viewBox="0 0 16 16"><circle cx="8" cy="8" r="8" fill="#dc5630"/><path d="M3.6 3.6 L12.4 12.4 M12.4 3.6 L3.6 12.4" stroke="#fff" stroke-width="3"/></svg>
<div class="t" style="left:1008px;top:524.93px;line-height:20px;font-size:11.75px;">Nicht optimiert</div>
<div class="t" style="left:1189px;top:524.93px;line-height:20px;font-size:11.75px;">0 %</div>
<svg class="a" style="left:285px;top:550px;" width="9" height="9" viewBox="0 0 9 9"><rect x="0.5" y="0.5" width="8" height="8" rx="0.8" fill="#f4f4f4" stroke="#8a8a8a"/><path d="M2 4.5 H7" stroke="#3c50a0" stroke-width="1"/><path d="M4.5 2 V7" stroke="#3c50a0" stroke-width="1"/></svg>
<div class="t" style="left:303px;top:544.93px;line-height:20px;font-size:11.75px;">Top 10 Ranking in Google</div>
<div class="t" style="left:539px;top:544.93px;line-height:20px;font-size:11.75px;">Fragt die Keywords des Projekts bei &quot;Google&quot; ab.</div>
<svg class="a" style="left:837px;top:550px;" width="12" height="9" viewBox="0 0 12 9"><path d="M6 1 L12 8.5 L0 8.5 Z" fill="#4a78b0"/></svg>
<div class="t" style="left:857px;top:544.93px;line-height:20px;font-size:11.75px;">Sehr wichtig</div>
<svg class="a" style="left:985px;top:547px;" width="16" height="16" viewBox="0 0 16 16"><circle cx="8" cy="8" r="8" fill="#dc5630"/><path d="M3.6 3.6 L12.4 12.4 M12.4 3.6 L3.6 12.4" stroke="#fff" stroke-width="3"/></svg>
<div class="t" style="left:1008px;top:544.93px;line-height:20px;font-size:11.75px;">Nicht optimiert</div>
<div class="t" style="left:1189px;top:544.93px;line-height:20px;font-size:11.75px;">0 %</div>
<svg class="a" style="left:285px;top:570px;" width="9" height="9" viewBox="0 0 9 9"><rect x="0.5" y="0.5" width="8" height="8" rx="0.8" fill="#f4f4f4" stroke="#8a8a8a"/><path d="M2 4.5 H7" stroke="#3c50a0" stroke-width="1"/><path d="M4.5 2 V7" stroke="#3c50a0" stroke-width="1"/></svg>
<div class="t" style="left:303px;top:564.93px;line-height:20px;font-size:11.75px;">Top 10 Ranking in Yahoo</div>
<div class="t" style="left:539px;top:564.93px;line-height:20px;font-size:11.75px;">Fragt die Keywords des Projekts bei &quot;Yahoo&quot; ab.</div>
<svg class="a" style="left:837px;top:570px;" width="12" height="9" viewBox="0 0 12 9"><path d="M6 1 L12 8.5 L0 8.5 Z" fill="#4a78b0"/></svg>
<div class="t" style="left:857px;top:564.93px;line-height:20px;font-size:11.75px;">Sehr wichtig</div>
<svg class="a" style="left:985px;top:567px;" width="16" height="16" viewBox="0 0 16 16"><circle cx="8" cy="8" r="8" fill="#dc5630"/><path d="M3.6 3.6 L12.4 12.4 M12.4 3.6 L3.6 12.4" stroke="#fff" stroke-width="3"/></svg>
<div class="t" style="left:1008px;top:564.93px;line-height:20px;font-size:11.75px;">Nicht optimiert</div>
<div class="t" style="left:1189px;top:564.93px;line-height:20px;font-size:11.75px;">0 %</div>
<svg class="a" style="left:285px;top:590px;" width="9" height="9" viewBox="0 0 9 9"><rect x="0.5" y="0.5" width="8" height="8" rx="0.8" fill="#f4f4f4" stroke="#8a8a8a"/><path d="M2 4.5 H7" stroke="#3c50a0" stroke-width="1"/><path d="M4.5 2 V7" stroke="#3c50a0" stroke-width="1"/></svg>
<div class="t" style="left:303px;top:584.93px;line-height:20px;font-size:11.75px;">Top 10 Ranking in Bing</div>
<div class="t" style="left:539px;top:584.93px;line-height:20px;font-size:11.75px;">Fragt die Keywords des Projekts bei &quot;Bing&quot; ab.</div>
<svg class="a" style="left:837px;top:590px;" width="12" height="9" viewBox="0 0 12 9"><path d="M6 1 L12 8.5 L0 8.5 Z" fill="#4a78b0"/></svg>
<div class="t" style="left:857px;top:584.93px;line-height:20px;font-size:11.75px;">Sehr wichtig</div>
<svg class="a" style="left:985px;top:587px;" width="16" height="16" viewBox="0 0 16 16"><circle cx="8" cy="8" r="8" fill="#dc5630"/><path d="M3.6 3.6 L12.4 12.4 M12.4 3.6 L3.6 12.4" stroke="#fff" stroke-width="3"/></svg>
<div class="t" style="left:1008px;top:584.93px;line-height:20px;font-size:11.75px;">Nicht optimiert</div>
<div class="t" style="left:1189px;top:584.93px;line-height:20px;font-size:11.75px;">0 %</div>
<svg class="a" style="left:285px;top:610px;" width="9" height="9" viewBox="0 0 9 9"><rect x="0.5" y="0.5" width="8" height="8" rx="0.8" fill="#f4f4f4" stroke="#8a8a8a"/><path d="M2 4.5 H7" stroke="#3c50a0" stroke-width="1"/><path d="M4.5 2 V7" stroke="#3c50a0" stroke-width="1"/></svg>
<div class="t" style="left:303px;top:604.93px;line-height:20px;font-size:11.75px;">Top 10 Ranking in Ask</div>
<div class="t" style="left:539px;top:604.93px;line-height:20px;font-size:11.75px;">Fragt die Keywords des Projekts bei &quot;Ask&quot; ab.</div>
<svg class="a" style="left:837px;top:610px;" width="12" height="9" viewBox="0 0 12 9"><path d="M6 1 L12 8.5 L0 8.5 Z" fill="#4a78b0"/></svg>
<div class="t" style="left:857px;top:604.93px;line-height:20px;font-size:11.75px;">Sehr wichtig</div>
<svg class="a" style="left:985px;top:607px;" width="16" height="16" viewBox="0 0 16 16"><circle cx="8" cy="8" r="8" fill="#dc5630"/><path d="M3.6 3.6 L12.4 12.4 M12.4 3.6 L3.6 12.4" stroke="#fff" stroke-width="3"/></svg>
<div class="t" style="left:1008px;top:604.93px;line-height:20px;font-size:11.75px;">Nicht optimiert</div>
<div class="t" style="left:1189px;top:604.93px;line-height:20px;font-size:11.75px;">0 %</div>
<svg class="a" style="left:267px;top:630px;" width="9" height="9" viewBox="0 0 9 9"><rect x="0.5" y="0.5" width="8" height="8" rx="0.8" fill="#f4f4f4" stroke="#8a8a8a"/><path d="M2 4.5 H7" stroke="#3c50a0" stroke-width="1"/></svg>
<div class="t" style="left:285px;top:624.93px;line-height:20px;font-size:11.75px;">SEO-Analyse der Startseite</div>
<div class="t" style="left:539px;top:624.93px;line-height:20px;font-size:11.75px;">Analysiert wie die Startseite in Bezug auf das primäre...</div>
<div class="t" style="left:303px;top:644.93px;line-height:20px;font-size:11.75px;">Title-Tag: Titel des HTML-Dokuments</div>
<div class="t" style="left:539px;top:644.93px;line-height:20px;font-size:11.75px;">Gibt es einen Titel für das Dokument (&lt;title&gt;-Tag)?</div>
<svg class="a" style="left:837px;top:650px;" width="12" height="9" viewBox="0 0 12 9"><path d="M6 1 L12 8.5 L0 8.5 Z" fill="#4a78b0"/></svg>
<div class="t" style="left:857px;top:644.93px;line-height:20px;font-size:11.75px;">Sehr wichtig</div>
<svg class="a" style="left:985px;top:647px;" width="16" height="16" viewBox="0 0 16 16"><circle cx="8" cy="8" r="8" fill="#62a38a"/><path d="M3.4 8.4 L6.4 11.2 L12.2 5" fill="none" stroke="#fff" stroke-width="2.6"/></svg>
<div class="t" style="left:1008px;top:644.93px;line-height:20px;font-size:11.75px;">Optimiert</div>
<div class="t" style="left:1189px;top:644.93px;line-height:20px;font-size:11.75px;">100 %</div>
<div class="t" style="left:303px;top:664.93px;line-height:20px;font-size:11.75px;">Title-Tag: Keyword-Frequenz im Titel</div>
<div class="t" style="left:539px;top:664.93px;line-height:20px;font-size:11.75px;">Kommt das Keyword mindestens einmal im Title-Ta...</div>
<svg class="a" style="left:837px;top:670px;" width="12" height="9" viewBox="0 0 12 9"><path d="M6 1 L12 8.5 L0 8.5 Z" fill="#4a78b0"/></svg>
<div class="t" style="left:857px;top:664.93px;line-height:20px;font-size:11.75px;">Sehr wichtig</div>
<svg class="a" style="left:985px;top:667px;" width="16" height="16" viewBox="0 0 16 16"><circle cx="8" cy="8" r="8" fill="#62a38a"/><path d="M3.4 8.4 L6.4 11.2 L12.2 5" fill="none" stroke="#fff" stroke-width="2.6"/></svg>
<div class="t" style="left:1008px;top:664.93px;line-height:20px;font-size:11.75px;">Optimiert</div>
<div class="t" style="left:1189px;top:664.93px;line-height:20px;font-size:11.75px;">100 %</div>
<div class="t" style="left:303px;top:684.93px;line-height:20px;font-size:11.75px;">Title-Tag: Keyworddichte im Titel</div>
<div class="t" style="left:539px;top:684.93px;line-height:20px;font-size:11.75px;">Ist das Verhältnis von Wörtern im Title-Tag im Vergle...</div>
<svg class="a" style="left:837px;top:690px;" width="12" height="9" viewBox="0 0 12 9"><path d="M6 1 L12 8.5 L0 8.5 Z" fill="#4a78b0"/></svg>
<div class="t" style="left:857px;top:684.93px;line-height:20px;font-size:11.75px;">Sehr wichtig</div>
<svg class="a" style="left:985px;top:687px;" width="16" height="16" viewBox="0 0 16 16"><circle cx="8" cy="8" r="8" fill="#62a38a"/><path d="M3.4 8.4 L6.4 11.2 L12.2 5" fill="none" stroke="#fff" stroke-width="2.6"/></svg>
<div class="t" style="left:1008px;top:684.93px;line-height:20px;font-size:11.75px;">Optimiert</div>
<div class="t" style="left:1189px;top:684.93px;line-height:20px;font-size:11.75px;">100 %</div>
<div class="t" style="left:303px;top:704.93px;line-height:20px;font-size:11.75px;">Title-Tag: Position des Keywords im Titel</div>
<div class="t" style="left:539px;top:704.93px;line-height:20px;font-size:11.75px;">Ist das primäre Keyword am Anfang des Title-Tags z...</div>
<svg class="a" style="left:837px;top:710px;" width="12" height="9" viewBox="0 0 12 9"><path d="M6 1 L12 8.5 L0 8.5 Z" fill="#4a78b0"/></svg>
<div class="t" style="left:857px;top:704.93px;line-height:20px;font-size:11.75px;">Sehr wichtig</div>
<svg class="a" style="left:985px;top:707px;" width="16" height="16" viewBox="0 0 16 16"><circle cx="8" cy="8" r="8" fill="#62a38a"/><path d="M3.4 8.4 L6.4 11.2 L12.2 5" fill="none" stroke="#fff" stroke-width="2.6"/></svg>
<div class="t" style="left:1008px;top:704.93px;line-height:20px;font-size:11.75px;">Optimiert</div>
<div class="t" style="left:1189px;top:704.93px;line-height:20px;font-size:11.75px;">100 %</div>
<div class="t" style="left:303px;top:724.93px;line-height:20px;font-size:11.75px;">Title-Tag: Länge des Titels</div>
<div class="t" style="left:539px;top:724.93px;line-height:20px;font-size:11.75px;">Hat der Titel die optimale Länge?</div>
<svg class="a" style="left:839px;top:729px;" width="10" height="12" viewBox="0 0 10 12"><path d="M1 0 L9 6 L1 12 Z" fill="#4a78b0"/></svg>
<div class="t" style="left:857px;top:724.93px;line-height:20px;font-size:11.75px;">Wichtig</div>
<svg class="a" style="left:985px;top:727px;" width="16" height="16" viewBox="0 0 16 16"><circle cx="8" cy="8" r="8" fill="#62a38a"/><path d="M3.4 8.4 L6.4 11.2 L12.2 5" fill="none" stroke="#fff" stroke-width="2.6"/></svg>
<div class="t" style="left:1008px;top:724.93px;line-height:20px;font-size:11.75px;">Optimiert</div>
<div class="t" style="left:1189px;top:724.93px;line-height:20px;font-size:11.75px;">100 %</div>
<div class="t" style="left:303px;top:744.93px;line-height:20px;font-size:11.75px;">Title-Tag: Sonderzeichen im Titel</div>
<div class="t" style="left:539px;top:744.93px;line-height:20px;font-size:11.75px;">Enthält der Titel Sonderzeichen?</div>
<svg class="a" style="left:839px;top:749px;" width="10" height="12" viewBox="0 0 10 12"><path d="M1 0 L9 6 L1 12 Z" fill="#4a78b0"/></svg>
<div class="t" style="left:857px;top:744.93px;line-height:20px;font-size:11.75px;">Wichtig</div>
<svg class="a" style="left:985px;top:747px;" width="16" height="16" viewBox="0 0 16 16"><circle cx="8" cy="8" r="8" fill="#62a38a"/><path d="M3.4 8.4 L6.4 11.2 L12.2 5" fill="none" stroke="#fff" stroke-width="2.6"/></svg>
<div class="t" style="left:1008px;top:744.93px;line-height:20px;font-size:11.75px;">Optimiert</div>
<div class="t" style="left:1189px;top:744.93px;line-height:20px;font-size:11.75px;">100 %</div>
<div class="t" style="left:303px;top:764.93px;line-height:20px;font-size:11.75px;">Domain/URL: Verwendung des Keyword...</div>
<div class="t" style="left:539px;top:764.93px;line-height:20px;font-size:11.75px;">Überprüft, ob das primäre Keyword im Domainname...</div>
<svg class="a" style="left:839px;top:769px;" width="10" height="12" viewBox="0 0 10 12"><path d="M1 0 L9 6 L1 12 Z" fill="#4a78b0"/></svg>
<div class="t" style="left:857px;top:764.93px;line-height:20px;font-size:11.75px;">Wichtig</div>
<svg class="a" style="left:985px;top:767px;" width="16" height="16" viewBox="0 0 16 16"><circle cx="8" cy="8" r="8" fill="#dc5630"/><path d="M3.6 3.6 L12.4 12.4 M12.4 3.6 L3.6 12.4" stroke="#fff" stroke-width="3"/></svg>
<div class="t" style="left:1008px;top:764.93px;line-height:20px;font-size:11.75px;">Nicht optimiert</div>
<div class="t" style="left:1189px;top:764.93px;line-height:20px;font-size:11.75px;">0 %</div>
<div class="t" style="left:303px;top:784.93px;line-height:20px;font-size:11.75px;">Domain/URL: Verwendung des Keyword...</div>
<div class="t" style="left:539px;top:784.93px;line-height:20px;font-size:11.75px;">Überprüft, ob das primäre Keyword im vollständigen...</div>
<svg class="a" style="left:839px;top:789px;" width="10" height="12" viewBox="0 0 10 12"><path d="M1 0 L9 6 L1 12 Z" fill="#4a78b0"/></svg>
<div class="t" style="left:857px;top:784.93px;line-height:20px;font-size:11.75px;">Wichtig</div>
<svg class="a" style="left:985px;top:787px;" width="16" height="16" viewBox="0 0 16 16"><circle cx="8" cy="8" r="8" fill="#dc5630"/><path d="M3.6 3.6 L12.4 12.4 M12.4 3.6 L3.6 12.4" stroke="#fff" stroke-width="3"/></svg>
<div class="t" style="left:1008px;top:784.93px;line-height:20px;font-size:11.75px;">Nicht optimiert</div>
<div class="t" style="left:1189px;top:784.93px;line-height:20px;font-size:11.75px;">0 %</div>
<div class="a" style="left:1292px;top:185px;width:16px;height:620px;background:#f0f0f0"></div>
<div class="a" style="left:1292px;top:202px;width:15px;height:259px;background:#cdcdcd"></div>
<svg class="a" style="left:1295px;top:190px;" width="9" height="8" viewBox="0 0 9 8"><path d="M1.3 6.3 L4.6 2.4 L7.9 6.3" fill="none" stroke="#505050" stroke-width="2.2" stroke-linejoin="miter"/></svg>
<svg class="a" style="left:1295px;top:793px;" width="9" height="8" viewBox="0 0 9 8"><path d="M1.3 1.7 L4.6 5.6 L7.9 1.7" fill="none" stroke="#505050" stroke-width="2.2" stroke-linejoin="miter"/></svg>
<div class="a" style="left:1313px;top:184px;width:358px;height:397px;background:#fff;border:1px solid #d9d9d9"></div>
<div class="a" style="left:1313px;top:581px;width:360px;height:4px;background:#f0f0f0"></div>
<div class="a" style="left:1313px;top:162px;width:129px;height:23px;background:#fff;border:1px solid #d9d9d9;border-bottom:none"></div>
<div class="t" style="left:1321px;top:162.93px;line-height:20px;font-size:11.75px;">Optimierungs-Details</div>
<div class="a" style="left:1317px;top:188px;width:351px;height:389px;background:#f0f0f0;border-top:2px solid #696969;border-left:2px solid #696969;border-right:1px solid #e3e3e3;border-bottom:1px solid #e3e3e3"></div>
<div class="t" style="left:1328px;top:202.78px;line-height:20px;font-size:14.2px;">Technische Analyse</div>
<svg class="a" style="left:1631px;top:205px;" width="19" height="26" viewBox="0 0 19 26"><path d="M14.8 1.5 L28.6 24.6 H1 Z" fill="#eec87a" stroke="#eec87a" stroke-width="1.6" stroke-linejoin="round"/><path d="M13 5.2 H16.9 L16.3 16.9 H13.6 Z" fill="#4a4a50"/><circle cx="15" cy="21" r="2" fill="#4a4a50"/></svg>
<div class="a" style="left:1651px;top:190px;width:17px;height:386px;background:#f0f0f0"></div>
<div class="a" style="left:1651px;top:207px;width:15px;height:324px;background:#cdcdcd"></div>
<div class="a" style="left:1650px;top:190px;width:1px;height:386px;background:#fff"></div>
<svg class="a" style="left:1654px;top:195px;" width="9" height="8" viewBox="0 0 9 8"><path d="M1.3 6.3 L4.6 2.4 L7.9 6.3" fill="none" stroke="#505050" stroke-width="2.2" stroke-linejoin="miter"/></svg>
<svg class="a" style="left:1654px;top:564px;" width="9" height="8" viewBox="0 0 9 8"><path d="M1.3 1.7 L4.6 5.6 L7.9 1.7" fill="none" stroke="#505050" stroke-width="2.2" stroke-linejoin="miter"/></svg>
<div class="t" style="left:1331px;top:243.93px;line-height:20px;font-size:11.75px;">Überprüft die technischen Details auf Fehler.</div>
<div class="t" style="left:1331px;top:311.93px;line-height:20px;font-size:11.75px;"><u>Mehr Informationen (Website)</u></div>
<div class="t" style="left:1331px;top:357.93px;line-height:20px;font-size:11.75px;">Wichtig</div>
<div class="t" style="left:1327px;top:380.43px;line-height:20px;font-size:11.75px;">Analyse-Ergebnisse:</div>
<div class="t" style="left:1331px;top:399.93px;line-height:20px;font-size:11.75px;">Wählen Sie ein Unterelement aus, um die Analysedaten</div>
<div class="t" style="left:1331px;top:414.93px;line-height:20px;font-size:11.75px;">anzusehen.</div>
<div class="t" style="left:1327px;top:497.93px;line-height:20px;font-size:11.75px;">Empfehlungen:</div>
<div class="t" style="left:1331px;top:516.93px;line-height:20px;font-size:11.75px;">Wählen Sie ein Unterelement aus, um die entsprechenden</div>
<div class="t" style="left:1331px;top:531.93px;line-height:20px;font-size:11.75px;">Beschreibungen anzusehen.</div>
<div class="a" style="left:1313px;top:607px;width:358px;height:199px;background:#fff;border:1px solid #d9d9d9"></div>
<div class="a" style="left:1313px;top:585px;width:91px;height:24px;background:#fff;border:1px solid #d9d9d9;border-bottom:none"></div>
<div class="t" style="left:1321px;top:585.93px;line-height:20px;font-size:11.75px;">Rating History</div>
<div class="a" style="left:1374px;top:618px;width:286px;height:1px;background:#dadada"></div>
<div class="a" style="left:1659px;top:618px;width:1px;height:144px;background:#dadada"></div>
<div class="a" style="left:1374px;top:654px;width:286px;height:1px;background:#d8d8d8"></div>
<div class="a" style="left:1374px;top:690px;width:286px;height:1px;background:#d8d8d8"></div>
<div class="a" style="left:1374px;top:726px;width:286px;height:1px;background:#d8d8d8"></div>
<div class="a" style="left:1516px;top:618px;width:1px;height:144px;background:#d8d8d8"></div>
<div class="a" style="left:1372px;top:618px;width:2px;height:145px;background:#a8a8a8"></div>
<div class="a" style="left:1372px;top:761px;width:288px;height:2px;background:#a8a8a8"></div>
<div class="a" style="left:1515px;top:763px;width:2px;height:4px;background:#b4b4b4"></div>
<div class="a" style="left:1368px;top:618px;width:4px;height:1px;background:#a8a8a8"></div>
<div class="a" style="left:1370px;top:630px;width:2px;height:1px;background:#b8b8b8"></div>
<div class="a" style="left:1370px;top:642px;width:2px;height:1px;background:#b8b8b8"></div>
<div class="a" style="left:1368px;top:654px;width:4px;height:1px;background:#a8a8a8"></div>
<div class="a" style="left:1370px;top:666px;width:2px;height:1px;background:#b8b8b8"></div>
<div class="a" style="left:1370px;top:678px;width:2px;height:1px;background:#b8b8b8"></div>
<div class="a" style="left:1368px;top:690px;width:4px;height:1px;background:#a8a8a8"></div>
<div class="a" style="left:1370px;top:702px;width:2px;height:1px;background:#b8b8b8"></div>
<div class="a" style="left:1370px;top:714px;width:2px;height:1px;background:#b8b8b8"></div>
<div class="a" style="left:1368px;top:726px;width:4px;height:1px;background:#a8a8a8"></div>
<div class="a" style="left:1370px;top:738px;width:2px;height:1px;background:#b8b8b8"></div>
<div class="a" style="left:1370px;top:750px;width:2px;height:1px;background:#b8b8b8"></div>
<div class="a" style="left:1368px;top:762px;width:4px;height:1px;background:#a8a8a8"></div>
<div class="t" style="left:1300px;width:66px;text-align:right;top:609.0px;line-height:20px;font-size:10.8px">100</div>
<div class="t" style="left:1300px;width:66px;text-align:right;top:645.0px;line-height:20px;font-size:10.8px">75</div>
<div class="t" style="left:1300px;width:66px;text-align:right;top:681.0px;line-height:20px;font-size:10.8px">50</div>
<div class="t" style="left:1300px;width:66px;text-align:right;top:717.0px;line-height:20px;font-size:10.8px">25</div>
<div class="t" style="left:1300px;width:66px;text-align:right;top:753.0px;line-height:20px;font-size:10.8px">0</div>
<div class="t" style="left:1487px;width:60px;text-align:center;top:765px;line-height:20px;font-size:10.5px">00:00</div>
<div class="t" style="left:1487px;width:60px;text-align:center;top:779px;line-height:20px;font-size:10.8px">Date</div>
<div class="t" style="left:1310px;top:679px;width:40px;text-align:center;line-height:20px;font-size:10.8px;transform:rotate(-90deg)">Value</div>
<div class="a" style="left:251px;top:836px;width:1424px;height:131px;background:#fff;border:1px solid #d9d9d9"></div>
<div class="a" style="left:251px;top:814px;width:52px;height:23px;background:#fff;border:1px solid #d9d9d9;border-bottom:none"></div>
<div class="t" style="left:259px;top:814.93px;line-height:20px;font-size:11.75px;">Filter</div>
<div class="a" style="left:255px;top:840px;width:1417px;height:65px;background:#f0f0f0;border-top:2px solid #696969;border-left:2px solid #696969;border-right:1px solid #e3e3e3;border-bottom:1px solid #e3e3e3"></div>
<div class="t" style="left:265px;top:862.73px;line-height:20px;font-size:11.75px;">Kein Filter definiert. Um einen Filter anzulegen, klicken Sie auf &quot;Neue Filterbedingung&quot;.</div>
<div class="a" style="left:255px;top:914px;width:1417px;height:41px;background:#fff;border:1px solid #a0a0a0"></div>
<svg class="a" style="left:264px;top:920px;" width="25" height="30" viewBox="0 0 25 30"><path d="M8.8 1 H23.8 L14.5 12.3 H19.9 L4.2 29.7 L7.6 16.8 H1.2 Z" fill="#ebc474"/></svg>
<div class="t" style="left:296px;top:925.43px;line-height:20px;font-size:11.75px;">Filter anwenden</div>
<div class="a" style="left:390px;top:918px;width:1px;height:33px;background:#8a8a8a"></div>
<svg class="a" style="left:400px;top:921px;" width="29" height="28" viewBox="0 0 29 28"><path d="M1 1 H28 L18 12 V27 H11 V12 Z" fill="#757575"/></svg>
<div class="t" style="left:435px;top:925.43px;line-height:20px;font-size:11.75px;">Neue Filterbedingung</div>
<div class="a" style="left:560px;top:918px;width:1px;height:33px;background:#8a8a8a"></div>
<svg class="a" style="left:570px;top:924px;" width="34" height="26" viewBox="0 0 34 26"><path d="M2.7 23.8 V4.3 H14.5 L17 1.5 H25.3 V8" fill="none" stroke="#e9c27c" stroke-width="1.3"/><path d="M2.2 23.8 L9.1 8.2 H31.6 L26.8 23.8 Z" fill="#e9c27c"/><path d="M17 16.5 Q21 11.5 28 13.2" fill="none" stroke="#fff" stroke-width="4.6"/><path d="M17 16.5 Q21 11.5 28 13.2" fill="none" stroke="#4674ae" stroke-width="2.6"/><path d="M30.9 11.2 V19.7 L22.6 18.4 Z" fill="#4674ae"/></svg>
<div class="a" style="left:608px;top:918px;width:1px;height:33px;background:#8a8a8a"></div>
<svg class="a" style="left:620px;top:920px;" width="28" height="30" viewBox="0 0 28 30"><path d="M0 1 H27 V28.8 H0 Z M2.9 2.9 V15.8 Q2.9 17 4.1 17 H23 Q24.2 17 24.2 15.8 V2.9 Z M5 19.8 V28 H21.1 V19.8 Z" fill="#8a50b0" fill-rule="evenodd"/><rect x="9.1" y="23.2" width="3.8" height="5" fill="#8a50b0"/></svg>
<div class="a" style="left:396px;top:970px;width:1px;height:17px;background:#d9d9d9"></div>
<div class="t" style="left:401px;top:969.93px;line-height:20px;font-size:11.75px;">62 von 62 Elementen zur Analyse ausgewählt</div>
<div class="a" style="left:1450px;top:970px;width:1px;height:17px;background:#d9d9d9"></div>
<svg class="a" style="left:1453px;top:972px;" width="15" height="14" viewBox="0 0 15 14"><path d="M0.5 0.5 H14.5 L9.5 6 V14 H5.5 V6 Z" fill="#7a7a7a"/></svg>
<div class="a" style="left:1476px;top:970px;width:1px;height:17px;background:#d9d9d9"></div>
<div class="a" style="left:1626px;top:970px;width:1px;height:17px;background:#d9d9d9"></div>
</body></html>
